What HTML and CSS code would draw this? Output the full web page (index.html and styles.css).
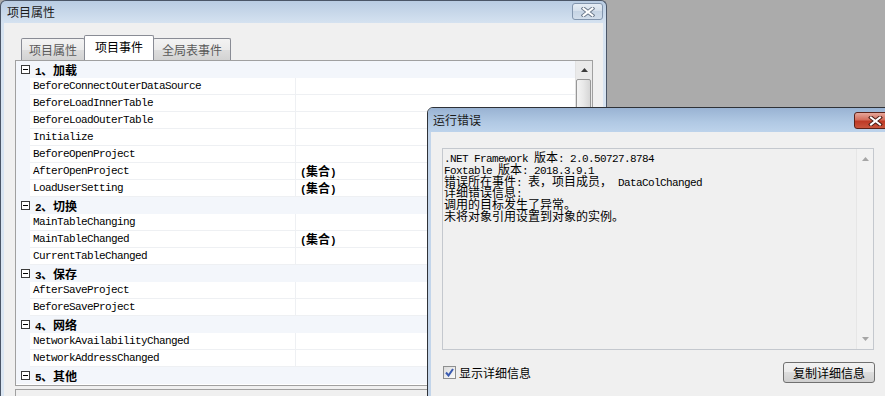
FILE: index.html
```html
<!DOCTYPE html>
<html lang="zh-CN">
<head>
<meta charset="UTF-8">
<title>项目属性</title>
<link rel="stylesheet" href="styles.css">
</head>
<body>
<div class="desktop">

    <!-- back window: project properties -->
    <div class="main-win">
        <div class="titlebar">
            <span class="title">项目属性</span>
            <span class="close-btn">
                <svg width="14" height="10" viewBox="0 0 14 10">
                    <path d="M2.5 1.5 L11.5 8.5 M11.5 1.5 L2.5 8.5" stroke="#6d7b8d" stroke-width="4" stroke-linecap="square"/>
                    <path d="M2.5 1.5 L11.5 8.5 M11.5 1.5 L2.5 8.5" stroke="#fff" stroke-width="2" stroke-linecap="square"/>
                </svg>
            </span>
        </div>
        <div class="client">
            <div class="tabs">
                <div class="tab t1">项目属性</div>
                <div class="tab t2 active">项目事件</div>
                <div class="tab t3">全局表事件</div>
            </div>
            <div class="grid">
                <div class="rows">
                    <div class="row cat"><span class="gutter"><i class="toggle"></i></span><span class="cat-name"><span class="en">1</span>、加载</span></div>
                    <div class="row"><span class="gutter"></span><span class="name en">BeforeConnectOuterDataSource</span><span class="value"></span></div>
                    <div class="row"><span class="gutter"></span><span class="name en">BeforeLoadInnerTable</span><span class="value"></span></div>
                    <div class="row"><span class="gutter"></span><span class="name en">BeforeLoadOuterTable</span><span class="value"></span></div>
                    <div class="row"><span class="gutter"></span><span class="name en">Initialize</span><span class="value"></span></div>
                    <div class="row"><span class="gutter"></span><span class="name en">BeforeOpenProject</span><span class="value"></span></div>
                    <div class="row"><span class="gutter"></span><span class="name en">AfterOpenProject</span><span class="value"><b><span class="en">(</span>集合<span class="en">)</span></b></span></div>
                    <div class="row"><span class="gutter"></span><span class="name en">LoadUserSetting</span><span class="value"><b><span class="en">(</span>集合<span class="en">)</span></b></span></div>
                    <div class="row cat"><span class="gutter"><i class="toggle"></i></span><span class="cat-name"><span class="en">2</span>、切换</span></div>
                    <div class="row"><span class="gutter"></span><span class="name en">MainTableChanging</span><span class="value"></span></div>
                    <div class="row"><span class="gutter"></span><span class="name en">MainTableChanged</span><span class="value"><b><span class="en">(</span>集合<span class="en">)</span></b></span></div>
                    <div class="row"><span class="gutter"></span><span class="name en">CurrentTableChanged</span><span class="value"></span></div>
                    <div class="row cat"><span class="gutter"><i class="toggle"></i></span><span class="cat-name"><span class="en">3</span>、保存</span></div>
                    <div class="row"><span class="gutter"></span><span class="name en">AfterSaveProject</span><span class="value"></span></div>
                    <div class="row"><span class="gutter"></span><span class="name en">BeforeSaveProject</span><span class="value"></span></div>
                    <div class="row cat"><span class="gutter"><i class="toggle"></i></span><span class="cat-name"><span class="en">4</span>、网络</span></div>
                    <div class="row"><span class="gutter"></span><span class="name en">NetworkAvailabilityChanged</span><span class="value"></span></div>
                    <div class="row"><span class="gutter"></span><span class="name en">NetworkAddressChanged</span><span class="value"></span></div>
                    <div class="row cat"><span class="gutter"><i class="toggle"></i></span><span class="cat-name"><span class="en">5</span>、其他</span></div>
                </div>
                <div class="vscroll">
                    <div class="arrow-btn"><svg width="7" height="4" viewBox="0 0 7 4"><path d="M0 4 L3.5 0 L7 4 Z" fill="#3c3c3c"/></svg></div>
                    <div class="thumb"></div>
                </div>
            </div>
            <div class="desc"><b class="en">AfterOpenProject</b></div>
        </div>
    </div>

    <!-- front window: runtime error -->
    <div class="err-win">
        <div class="titlebar err-title">
            <span class="title">运行错误</span>
            <span class="close-btn red">
                <svg width="15" height="10" viewBox="0 0 15 10">
                    <path d="M3 1.5 L12 8.5 M12 1.5 L3 8.5" stroke="#4a1a14" stroke-width="4" stroke-linecap="square"/>
                    <path d="M3 1.5 L12 8.5 M12 1.5 L3 8.5" stroke="#fff" stroke-width="2" stroke-linecap="square"/>
                </svg>
            </span>
        </div>
        <div class="err-client">
            <div class="detail-box">
                <div class="detail-text">
                    <div class="line"><span class="en">.NET Framework </span>版本<span class="en">: 2.0.50727.8784</span></div>
                    <div class="line"><span class="en">Foxtable </span>版本<span class="en">: 2018.3.9.1</span></div>
                    <div class="line">错误所在事件<span class="en">: </span>表，项目成员，<span class="en"> DataColChanged</span></div>
                    <div class="line">详细错误信息<span class="en">:</span></div>
                    <div class="line">调用的目标发生了异常。</div>
                    <div class="line">未将对象引用设置到对象的实例。</div>
                </div>
                <div class="box-scroll">
                    <svg width="7" height="4" viewBox="0 0 7 4"><path d="M0 4 L3.5 0 L7 4 Z" fill="#a6a6a6"/></svg>
                    <svg width="7" height="4" viewBox="0 0 7 4"><path d="M0 0 L3.5 4 L7 0 Z" fill="#a6a6a6"/></svg>
                </div>
            </div>
            <div class="err-footer">
                <label class="check">
                    <span class="checkbox">
                        <svg width="9" height="9" viewBox="0 0 9 9"><path d="M1 4.5 L3.5 7.5 L8 1" fill="none" stroke="#3a5bb0" stroke-width="2"/></svg>
                    </span>
                    显示详细信息
                </label>
                <button class="btn">复制详细信息</button>
            </div>
        </div>
    </div>

</div>
</body>
</html>
```

FILE: styles.css
```css
body {
    margin: 0;
    background-color: #ababab;
    font-family: "Noto Sans CJK SC", sans-serif;
    font-size: 12px;
    color: #000;
    overflow: hidden;
}

.desktop {
    position: relative;
    width: 885px;
    height: 396px;
    overflow: hidden;
}

/* latin text in the old bitmap look: 6px per char */
.en {
    font-family: "Liberation Mono", monospace;
    font-size: 11px;
    letter-spacing: -0.6px;
}

/* ---------- windows ---------- */
.main-win {
    width: 607px;
    height: 396px;
    box-sizing: border-box;
    border: 1px solid #4b5667;
    border-bottom: none;
    border-radius: 6px 6px 0 0;
    background: linear-gradient(#b9cce2, #d6e3f1 23px, #dce7f3);
    padding: 0 3px;
    display: flex;
    flex-direction: column;
}

.titlebar {
    height: 22px;
    display: flex;
    justify-content: space-between;
    flex-shrink: 0;
}

.titlebar .title {
    padding-left: 3px;
    line-height: 22px;
    color: #1b1b1b;
}

.close-btn {
    width: 31px;
    height: 17px;
    margin-top: 2px;
    box-sizing: border-box;
    border: 1px solid #8295ad;
    border-radius: 3px;
    background: linear-gradient(#e6edf5, #d4dfeb 50%, #c6d4e4 50%, #d2deeb);
    display: flex;
    align-items: center;
    justify-content: center;
}

.client {
    flex: 1;
    background: #f0f0f0;
    padding: 12px 0 0 11px;
    display: flex;
    flex-direction: column;
}

/* ---------- tabs ---------- */
.tabs {
    display: flex;
    align-items: flex-end;
    height: 25px;
    margin-left: 6px;
}

.tab {
    box-sizing: border-box;
    height: 22px;
    border: 1px solid #898c95;
    border-bottom: none;
    border-radius: 2px 2px 0 0;
    background: linear-gradient(#f3f3f3, #ebebeb 50%, #dedede 50%, #d3d3d3);
    color: #5a5a5a;
    text-align: center;
    line-height: 21px;
    margin-left: -1px;
}

.tab.t1 { width: 64px; margin-left: 0; }
.tab.t2 { width: 70px; }
.tab.t3 { width: 78px; }

.tab.active {
    height: 25px;
    background: #fff;
    color: #000;
    line-height: 21px;
    position: relative;
    z-index: 1;
}

/* ---------- property grid ---------- */
.grid {
    width: 578px;
    height: 326px;
    box-sizing: border-box;
    border: 1px solid #a0a0a0;
    background: #fff;
    display: flex;
    flex-shrink: 0;
}

.rows {
    width: 559px;
}

.row {
    display: flex;
    height: 17px;
    line-height: 16px;
}

.gutter {
    width: 14px;
    flex-shrink: 0;
    background: #f3f6fb;
    display: flex;
    align-items: center;
    justify-content: center;
}

.name {
    width: 262px;
    padding-left: 3px;
    border-right: 1px solid #eef0f3;
    border-bottom: 1px solid #eef0f3;
    white-space: nowrap;
}

.value {
    flex: 1;
    padding-left: 4px;
    border-bottom: 1px solid #eef0f3;
}

.value b {
    font-weight: bold;
}

.row.cat {
    background: #f3f6fb;
    line-height: 17px;
}

.row.cat .gutter {
    padding-left: 2px;
}

.cat-name {
    padding-left: 3px;
    font-weight: bold;
}

.cat-name .en {
    font-weight: bold;
}

.toggle {
    width: 9px;
    height: 9px;
    box-sizing: border-box;
    border: 1px solid #3a3a3a;
    background: #fff;
    position: relative;
}

.toggle::after {
    content: "";
    position: absolute;
    left: 1px;
    right: 1px;
    top: 3px;
    height: 1px;
    background: #000;
}

.vscroll {
    width: 17px;
    background: #eaeaea;
    border-left: 1px solid #e2e2e2;
    box-sizing: border-box;
}

.arrow-btn {
    height: 17px;
    display: flex;
    align-items: center;
    justify-content: center;
}

.thumb {
    margin: 1px 0 0 0;
    width: 15px;
    height: 220px;
    box-sizing: border-box;
    border: 1px solid #979797;
    border-radius: 2px;
    background: linear-gradient(90deg, #f4f4f4, #e8e8e8 50%, #d6d6d6);
}

.desc {
    width: 578px;
    box-sizing: border-box;
    margin-top: 3px;
    flex: 1;
    border: 1px solid #a0a0a0;
    padding: 3px 4px;
}

.desc b {
    font-weight: bold;
}

/* ---------- error dialog ---------- */
.err-win {
    position: absolute;
    left: 427px;
    top: 107px;
    width: 475px;
    height: 300px;
    box-sizing: border-box;
    border: 1px solid #2f3237;
    border-radius: 6px 6px 0 0;
    background: #c3d5ea;
    padding: 0 3px;
    display: flex;
    flex-direction: column;
}

.err-title {
    height: 24px;
    background: linear-gradient(#99b3d3, #b1c9e4 60%, #bdd3eb);
    margin: 0 -3px;
    padding: 0 3px;
    border-radius: 5px 5px 0 0;
}

.err-title .title {
    padding-left: 2px;
    line-height: 24px;
}

.close-btn.red {
    width: 43px;
    height: 17px;
    margin-top: 4px;
    margin-right: 1px;
    border-color: #5c2219;
    background: linear-gradient(#e6a69a, #d36d5c 45%, #be3a26 55%, #c9553e);
}

.err-client {
    flex: 1;
    background: #f0f0f0;
    padding: 16px 0 0 11px;
}

.detail-box {
    width: 432px;
    height: 202px;
    box-sizing: border-box;
    border: 1px solid #c4c8ce;
    background: #f0f0f0;
    display: flex;
}

.detail-text {
    flex: 1;
    padding: 2px 0 0 1px;
}

.detail-text .line {
    height: 11.8px;
    line-height: 11.8px;
    white-space: nowrap;
}

.box-scroll {
    width: 17px;
    border-left: 1px solid #e6e6e6;
    background: #f2f2f2;
    box-sizing: border-box;
    display: flex;
    flex-direction: column;
    justify-content: space-between;
    align-items: center;
    padding: 8px 0 8px 0;
}

.err-footer {
    width: 432px;
    height: 20px;
    margin-top: 12px;
    display: flex;
    justify-content: space-between;
    align-items: center;
}

.check {
    display: flex;
    align-items: center;
    gap: 3px;
    padding-left: 1px;
}

.checkbox {
    width: 13px;
    height: 13px;
    box-sizing: border-box;
    border: 1px solid #8e8f8f;
    background: linear-gradient(135deg, #dcdcdc, #fbfbfb);
    display: flex;
    align-items: center;
    justify-content: center;
}

.btn {
    width: 92px;
    height: 21px;
    margin-right: -1px;
    border: 1px solid #707070;
    border-radius: 3px;
    background: linear-gradient(#f2f2f2, #ebebeb 50%, #dddddd 50%, #cfcfcf);
    font-family: "Noto Sans CJK SC", sans-serif;
    font-size: 12px;
    color: #000;
    padding: 0;
}
```
